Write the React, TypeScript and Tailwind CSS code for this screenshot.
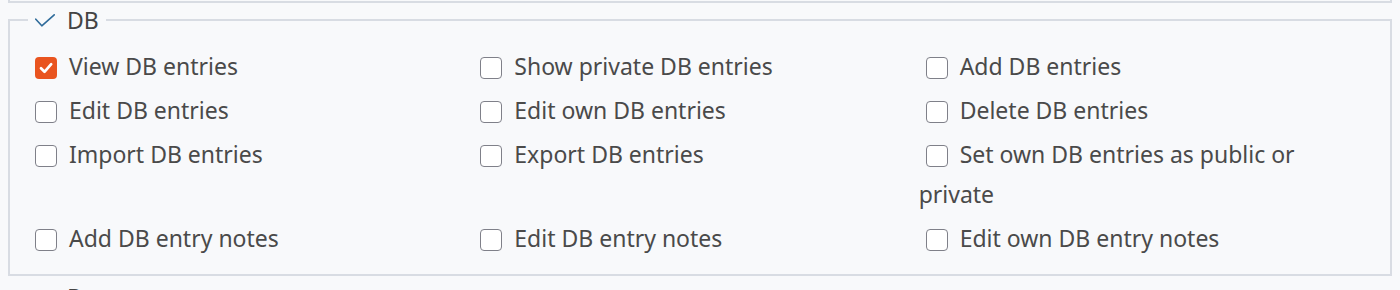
import React from 'react';

type Perm = { label: string; checked?: boolean };

const dbPerms: Perm[] = [
  { label: 'View DB entries', checked: true },
  { label: 'Show private DB entries' },
  { label: 'Add DB entries' },
  { label: 'Edit DB entries' },
  { label: 'Edit own DB entries' },
  { label: 'Delete DB entries' },
  { label: 'Import DB entries' },
  { label: 'Export DB entries' },
  { label: 'Set own DB entries as public or private' },
  { label: 'Add DB entry notes' },
  { label: 'Edit DB entry notes' },
  { label: 'Edit own DB entry notes' },
];

const LegendCheck = () => (
  <svg width="20" height="13" viewBox="0 0 20 13" fill="none" className="shrink-0">
    <polyline points="0.8,5.2 6.8,11.8 19.2,0.8" stroke="#2f6b9a" strokeWidth="1.6" strokeLinecap="round" strokeLinejoin="round" />
  </svg>
);

const Box = ({ checked }: { checked?: boolean }) =>
  checked ? (
    <span className="inline-block align-middle relative -top-[1px] w-[22px] h-[22px] ml-[7px] mr-[12px] rounded-[4px] bg-[#e9541f]">
      <svg width="22" height="22" viewBox="0 0 22 22" fill="none">
        <polyline points="6,11.3 9.5,14.8 16.2,7.2" stroke="#fff" strokeWidth="2.7" strokeLinecap="round" strokeLinejoin="round" />
      </svg>
    </span>
  ) : (
    <span className="inline-block align-middle relative -top-[1px] w-[22px] h-[22px] ml-[7px] mr-[12px] rounded-[4px] border-[1.5px] border-[#7f8089] bg-white" />
  );

const Section = ({ title, perms, className }: { title: string; perms: Perm[]; className?: string }) => (
  <fieldset className={`mx-2 border-2 border-[#d8dce3] pl-[18px] pr-[26px] pt-[11px] pb-[14px] ${className ?? 'mt-1'}`}>
    <legend className="flex items-center gap-3 px-[7px] h-[26px] text-[23px] leading-[26px] text-[#444]">
      <LegendCheck />
      <span>{title}</span>
    </legend>
    <div className="grid grid-cols-3">
      {perms.map(p => (
        <label key={p.label} className="block py-[2px] leading-[40px] text-[23px] text-[#4a4a4a]">
          <Box checked={p.checked} />
          {p.label}
        </label>
      ))}
    </div>
  </fieldset>
);

export default function App() {
  return (
    <div className="min-h-screen bg-[#f8f9fb] font-['Noto_Sans',sans-serif] overflow-hidden h-[290px]">
      <div className="mx-2 h-[3px] border-x-2 border-b-2 border-[#d8dce3]" />
      <Section title="DB" perms={dbPerms} />
      <Section title="Documents" perms={[{ label: 'View documents' }]} className="mt-[8px]" />
    </div>
  );
}
